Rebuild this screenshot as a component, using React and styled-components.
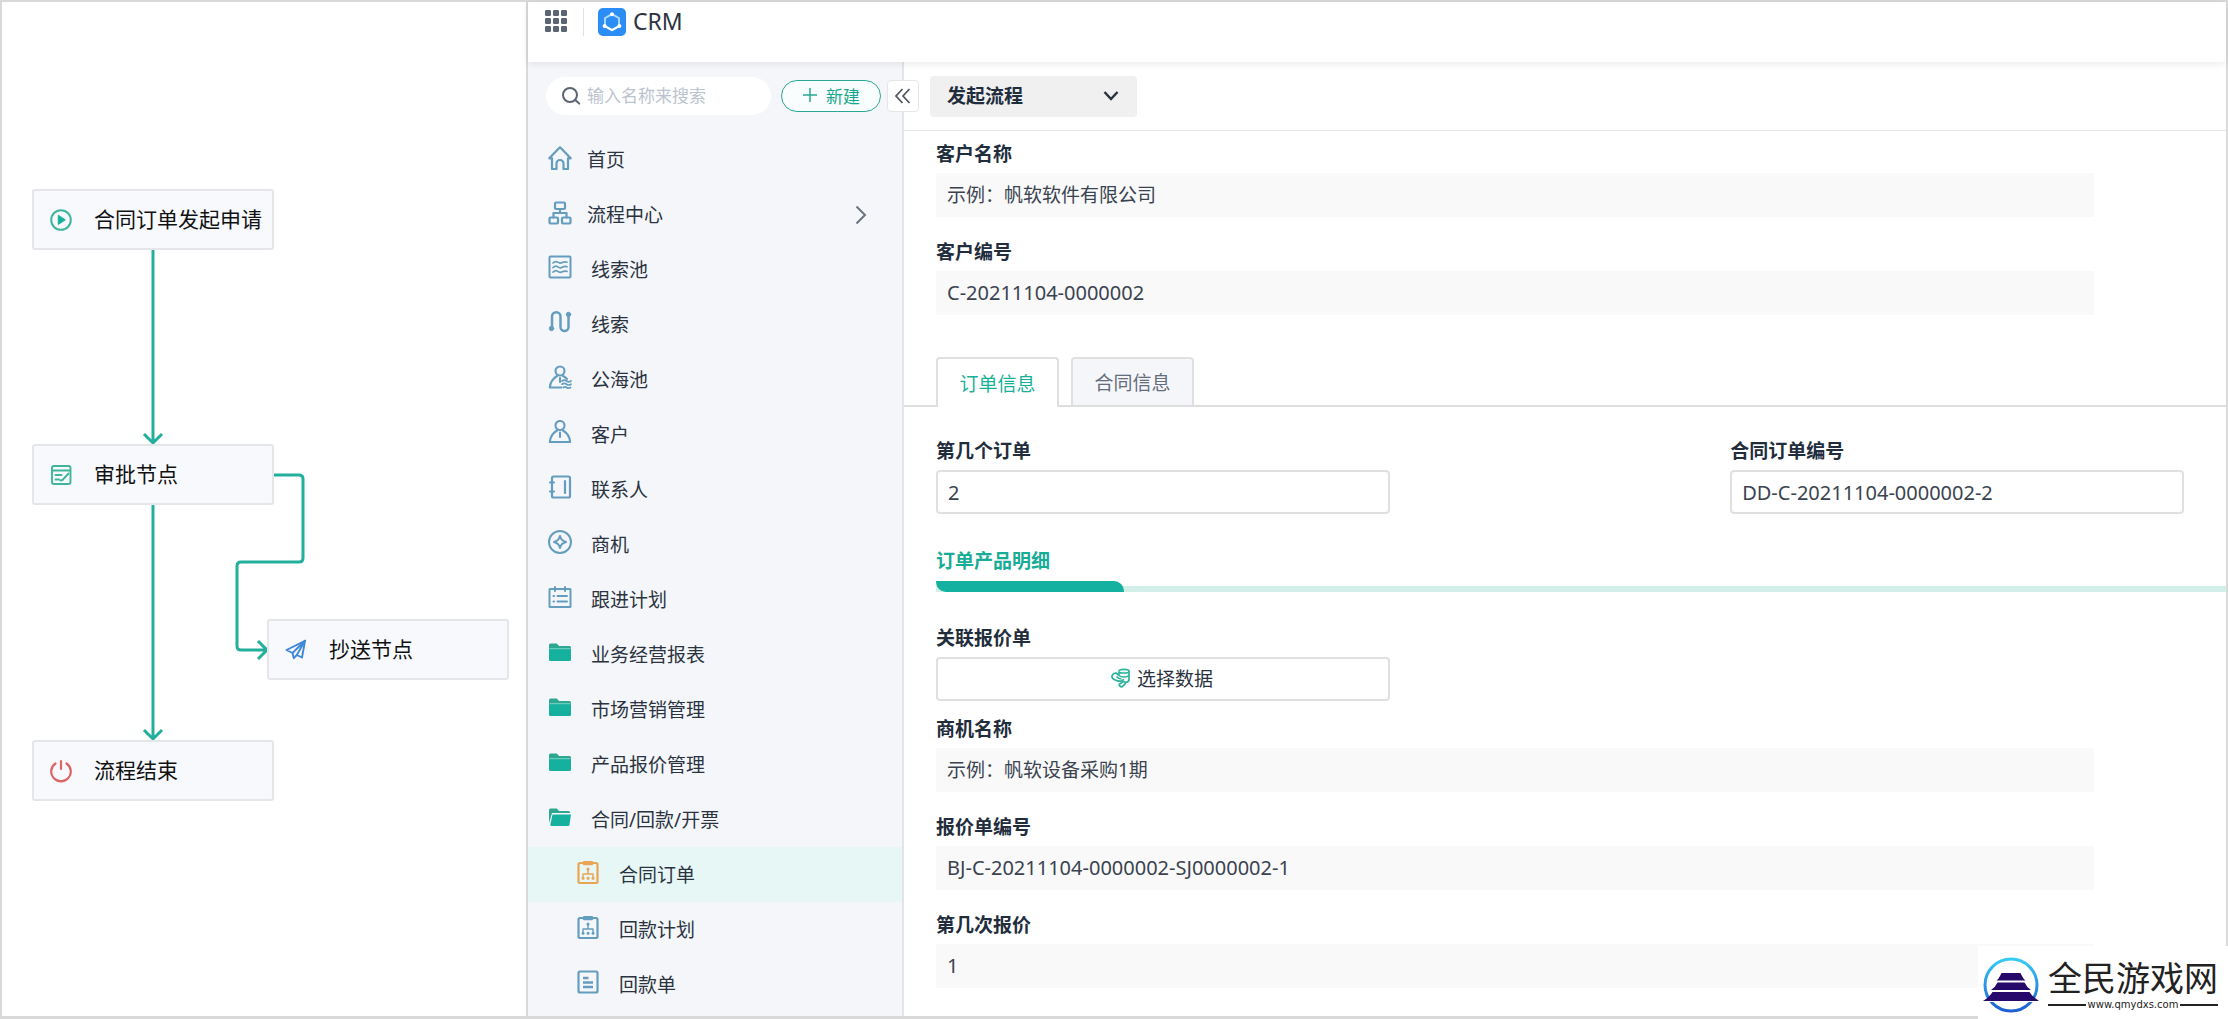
import React, { useState } from 'react';
import styled, { createGlobalStyle } from 'styled-components';

const App = () => {
    const [active, setActive] = useState('合同订单');
    const [tab, setTab] = useState('订单信息');

    return (
        <>
            <GlobalStyle />
            <Frame>
                <FlowPanel>
                    <FlowLines width="510" height="801" viewBox="0 0 510 801">
                        <path d="M151 250V441M142 434l9 9 9-9" />
                        <path d="M151 505V737M142 730l9 9 9-9" />
                        <path d="M272 475h25q4 0 4 4v79q0 4-4 4h-58q-4 0-4 4v80q0 4 4 4h25M256 641l9 9-9 9" />
                    </FlowLines>
                    {flowNodes.map((node) => (
                        <FlowNode key={node.label} $x={node.x} $y={node.y}>
                            {node.icon}
                            <FlowNodeText>{node.label}</FlowNodeText>
                        </FlowNode>
                    ))}
                </FlowPanel>

                <CrmPanel>
                    <Header>
                        <IconButton type="button" aria-label="应用">
                            <GridIcon />
                        </IconButton>
                        <HeaderDivider />
                        <CrmLogo />
                        <HeaderTitle>CRM</HeaderTitle>
                    </Header>

                    <Body>
                        <Sidebar>
                            <SidebarTop>
                                <SearchBox>
                                    <SearchIcon />
                                    <SearchInput type="text" aria-label="搜索" placeholder="输入名称来搜索" />
                                </SearchBox>
                                <NewButton type="button">
                                    <PlusIcon />
                                    新建
                                </NewButton>
                            </SidebarTop>
                            <CollapseButton type="button" aria-label="收起">
                                <CollapseIcon />
                            </CollapseButton>
                            <nav>
                                {menu.map((item) => (
                                    <MenuItem
                                        key={item.label}
                                        href="#"
                                        $level={item.level}
                                        $active={active === item.label}
                                        onClick={() => setActive(item.label)}
                                    >
                                        <MenuIcon $level={item.level}>{item.icon}</MenuIcon>
                                        <MenuText>{item.label}</MenuText>
                                        {item.more && <ArrowRightIcon />}
                                    </MenuItem>
                                ))}
                            </nav>
                        </Sidebar>

                        <Content>
                            <Toolbar>
                                <SelectWrapper>
                                    <FlowSelect aria-label="流程" defaultValue="发起流程">
                                        <option>发起流程</option>
                                    </FlowSelect>
                                    <SelectArrow />
                                </SelectWrapper>
                            </Toolbar>

                            <ReadOnlyGroup $top="10px">
                                <ReadOnlyField id="customer" label="客户名称" value="示例：帆软软件有限公司" />
                                <ReadOnlyField id="customerNo" label="客户编号" value="C-20211104-0000002" latin />
                            </ReadOnlyGroup>

                            <TabList role="tablist">
                                {['订单信息', '合同信息'].map((name) => (
                                    <Tab
                                        key={name}
                                        type="button"
                                        role="tab"
                                        aria-selected={tab === name}
                                        $active={tab === name}
                                        onClick={() => setTab(name)}
                                    >
                                        {name}
                                    </Tab>
                                ))}
                            </TabList>

                            <FormGrid>
                                <Field>
                                    <Label htmlFor="orderIndex">第几个订单</Label>
                                    <TextInput id="orderIndex" defaultValue="2" />
                                </Field>
                                <LastField>
                                    <Label htmlFor="orderNo">合同订单编号</Label>
                                    <TextInput id="orderNo" defaultValue="DD-C-20211104-0000002-2" />
                                </LastField>
                            </FormGrid>

                            <SectionTitle>订单产品明细</SectionTitle>
                            <SectionBar>
                                <SectionBarHead />
                            </SectionBar>

                            <FormGrid>
                                <Field>
                                    <Label htmlFor="quote">关联报价单</Label>
                                    <PickButton id="quote" type="button">
                                        <DataIcon />
                                        选择数据
                                    </PickButton>
                                </Field>
                            </FormGrid>

                            <ReadOnlyGroup $top="15px">
                                <ReadOnlyField id="chance" label="商机名称" value="示例：帆软设备采购1期" />
                                <ReadOnlyField id="quoteNo" label="报价单编号" value="BJ-C-20211104-0000002-SJ0000002-1" latin />
                                <ReadOnlyField id="quoteTimes" label="第几次报价" value="1" latin />
                            </ReadOnlyGroup>
                        </Content>
                    </Body>
                </CrmPanel>

                <SiteMark>
                    <PagodaLogo />
                    <SiteText>
                        <SiteName>全民游戏网</SiteName>
                        <SiteUrl>www.qmydxs.com</SiteUrl>
                    </SiteText>
                </SiteMark>
            </Frame>
        </>
    );
};

const ReadOnlyField = ({ id, label, value, latin }) => (
    <Field>
        <Label htmlFor={id}>{label}</Label>
        <ReadOnlyInput id={id} value={value} readOnly $latin={latin} />
    </Field>
);

/* ---------- icons ---------- */

const LineIcon = ({ size = 24, color = '#659dbf', width = 2.2, children }) => (
    <svg
        width={size}
        height={size}
        viewBox="0 0 24 24"
        fill="none"
        stroke={color}
        strokeWidth={width}
        strokeLinecap="round"
        strokeLinejoin="round"
        aria-hidden="true"
    >
        {children}
    </svg>
);

const GridIcon = () => (
    <svg width="22" height="22" viewBox="0 0 22 22" fill="#5b6472" aria-hidden="true">
        {[0, 8, 16].map((y) => [0, 8, 16].map((x) => <rect key={`${x}-${y}`} x={x} y={y} width="6" height="6" rx="1.2" />))}
    </svg>
);

const CrmLogo = () => (
    <svg width="28" height="28" viewBox="0 0 28 28" fill="none" aria-hidden="true">
        <rect width="28" height="28" rx="5" fill="#2b8df5" />
        <path d="M14 6.2l7 4v8l-7 4-7-4v-8z" stroke="#a9d8ff" strokeWidth="2" strokeLinejoin="round" />
        <path d="M7 18.2l7 4 7-4" stroke="#fff" strokeWidth="2" strokeLinejoin="round" />
        <circle cx="14" cy="6.2" r="2" fill="#fff" />
        <circle cx="6.6" cy="18" r="2" fill="#fff" />
        <circle cx="21.4" cy="18" r="2" fill="#fff" />
    </svg>
);

const SearchIcon = () => (
    <svg width="20" height="20" viewBox="0 0 20 20" fill="none" stroke="#5b6472" strokeWidth="2" strokeLinecap="round" aria-hidden="true">
        <circle cx="8" cy="9" r="7" />
        <path d="M13.2 14l4 3.6" />
    </svg>
);

const PlusIcon = () => (
    <svg width="16" height="16" viewBox="0 0 16 16" stroke="#2aa893" strokeWidth="1.5" aria-hidden="true">
        <path d="M8 1v14M1 8h14" />
    </svg>
);

const CollapseIcon = () => (
    <svg width="18" height="18" viewBox="0 0 18 18" fill="none" stroke="#4c5260" strokeWidth="1.7" aria-hidden="true">
        <path d="M8.5 2L2 9l6.5 7M15.5 2L9 9l6.5 7" />
    </svg>
);

const ArrowRightIcon = () => (
    <svg width="12" height="20" viewBox="0 0 12 20" fill="none" stroke="#6b7280" strokeWidth="2" aria-hidden="true">
        <path d="M1.5 1.5L10 10l-8.5 8.5" />
    </svg>
);

const PlayIcon = () => (
    <LineIcon color="#3fb59e" width={2}>
        <circle cx="12" cy="12" r="9.8" />
        <path d="M9.3 7.6v8.8l6.7-4.4z" fill="#16af98" stroke="#16af98" strokeWidth="1" />
    </LineIcon>
);

const ApproveIcon = () => (
    <LineIcon color="#3fb59e" width={1.9}>
        <rect x="3" y="3" width="18.5" height="18" rx="2" />
        <path d="M3.5 7.5h17.5M6.5 12h6M6.5 16.5h3.5M11.5 17.5l2-.5 6-6.5" />
    </LineIcon>
);

const SendIcon = () => (
    <LineIcon color="#4189d6" width={1.9}>
        <path d="M21 2.8L2.5 12l6 3 1.3 5.2 3-3.2 5.2 2.5z" />
        <path d="M21 2.8L8.5 15M21 2.8l-8.2 14.2" />
    </LineIcon>
);

const PowerIcon = () => (
    <LineIcon color="#dd6465">
        <path d="M12 2v8" />
        <path d="M6.5 4.5a9.8 9.8 0 1 0 11 0" />
    </LineIcon>
);

const HomeIcon = () => (
    <LineIcon>
        <path d="M1.3 12.3L12 1.3l10.7 11H20V23h-4.5v-5.5a3.5 3.5 0 0 0-7 0V23H4V12.3z" />
    </LineIcon>
);

const ProcessIcon = () => (
    <LineIcon>
        <rect x="7" y="1.5" width="10" height="6.5" rx="1" />
        <rect x="1.5" y="16.5" width="8.5" height="6" rx="1" />
        <rect x="14" y="16.5" width="8.5" height="6" rx="1" />
        <path d="M12 8v4M5.5 16.5V12h13v4.5" />
    </LineIcon>
);

const PoolIcon = () => (
    <LineIcon width={2}>
        <rect x="1.5" y="1.5" width="21" height="21" rx="1" />
        <path d="M5 8q2.5-2.5 4.7-.8t4.6.4T19 7.2M5 12.6q2.5-2.5 4.7-.8t4.6.4 4.7-.4M5 17.2q2.5-2.5 4.7-.8t4.6.4 4.7-.4" strokeWidth="1.7" />
    </LineIcon>
);

const ClueIcon = () => (
    <LineIcon width={2.5}>
        <path d="M4 18V6.5a4 4 0 0 1 8.5 0v10.5a4 4 0 0 0 8 0V6" />
        <circle cx="3.5" cy="18.5" r="2.2" fill="#659dbf" stroke="#659dbf" strokeWidth="1" />
        <circle cx="20.5" cy="4.5" r="2.2" fill="#659dbf" stroke="#659dbf" strokeWidth="1" />
    </LineIcon>
);

const SeaIcon = () => (
    <LineIcon width={2.1}>
        <circle cx="12" cy="6" r="4.5" />
        <path d="M13.5 22.5H1.8q.7-7.5 7.2-11.5M15 11q2.5 1.3 4 3M12 13v4" />
        <path d="M14 16q2.300-1.600 4.500 0t4.500 0M14 19.2q2.300-1.600 4.500 0t4.500 0M15.5 22.500q1.500-1.300 3 0t4 0" strokeWidth="1.7" />
    </LineIcon>
);

const CustomerIcon = () => (
    <LineIcon width={2.1}>
        <circle cx="12" cy="5.5" r="4.5" />
        <path d="M9 10.5q-6.5 4-7.2 11.5h20.4q-.7-7.5-7.2-11.5M12 12.5v4.5" />
    </LineIcon>
);

const ContactIcon = () => (
    <LineIcon>
        <rect x="4" y="1.5" width="18" height="21" rx="1.5" />
        <path d="M17 6v12M2 7.5h4M2 16.5h4" />
    </LineIcon>
);

const ChanceIcon = () => (
    <LineIcon width={2}>
        <circle cx="12" cy="12" r="11" />
        <path d="M12 6q1.2 4.8 6 6-4.8 1.2-6 6-1.2-4.8-6-6 4.8-1.2 6-6z" />
    </LineIcon>
);

const PlanIcon = () => (
    <LineIcon width={2}>
        <rect x="1.5" y="4" width="21" height="18" rx="0.5" />
        <path d="M7 2v4M17 2v4M9.5 11H19M9.5 16.5H19M5.5 11h.6M5.5 16.5h.6" />
    </LineIcon>
);

const FolderIcon = () => (
    <svg width="24" height="24" viewBox="0 0 24 24" aria-hidden="true">
        <path d="M1 7V5a1.5 1.5 0 0 1 1.5-1.5h6.3L11 6h10.5A1.5 1.5 0 0 1 23 7.5V9H1z" fill="#2ea791" />
        <path d="M1 8.5h22v11a1.5 1.5 0 0 1-1.5 1.5h-19A1.5 1.5 0 0 1 1 19.5z" fill="#16b09f" />
        <path d="M1.5 8.7h21" stroke="#7fd3c6" strokeWidth="1" />
    </svg>
);

const FolderOpenIcon = () => (
    <svg width="24" height="24" viewBox="0 0 24 24" aria-hidden="true">
        <path d="M1 18V5a1.5 1.5 0 0 1 1.5-1.5h6.3L11 6h9.5A1.5 1.5 0 0 1 22 7.5V8H4z" fill="#2ea791" />
        <path d="M4.5 9.5H23l-1.5 10.3q-.2 1.2-1.5 1.2H3.5q-1.3 0-1.2-1.3z" fill="#16b09f" />
    </svg>
);

const ClipboardIcon = ({ color }) => (
    <LineIcon color={color}>
        <rect x="2.5" y="3" width="19" height="20" rx="1.5" />
        <path d="M8 2.2h8v2H8z" fill={color} />
        <path d="M12 9v5M7 17v-3h10v3" strokeWidth="1.4" />
        <path d="M12 9v.2M7 18.2h.1M12 18.2h.1M17 18.2h.1" strokeWidth="3" />
    </LineIcon>
);

const DocIcon = () => (
    <LineIcon>
        <rect x="2.5" y="1.5" width="19" height="21" rx="1.5" />
        <path d="M7 8h5.5M7 12.5h10M7 17h10" strokeWidth="2.4" strokeLinecap="butt" />
    </LineIcon>
);

const DataIcon = () => (
    <svg width="20" height="20" viewBox="0 0 20 20" fill="none" stroke="#2db29c" strokeWidth="1.7" strokeLinejoin="round" aria-hidden="true">
        <path d="M8 3.2q0-1.8 5-1.8t5 1.8v9.3q-1 1.8-3.5 1.8" />
        <path d="M8 3.2q0 1.8 5 1.8t5-1.8M8 3.2v4.3q1.5 1.5 5 1.5t5-1.5" />
        <path d="M7.5 7L5.5 5.2Q3 4.8 1.5 7t.8 4q3 2 7.2 2.3l3.5-1.8" />
        <path d="M5.5 8.5q2 2.5 5 2.5M8.2 16.2l4.5-2.7q2 .3 1.5 2.3l-3.2 3q-2.8-.2-2.8-2.6z" />
    </svg>
);

const PagodaLogo = () => (
    <svg width="58" height="58" viewBox="0 0 58 58" aria-hidden="true">
        <defs>
            <linearGradient id="ring" x1="0" y1="0" x2="0" y2="1">
                <stop offset="0" stopColor="#35cdf4" />
                <stop offset="1" stopColor="#1f5fd0" />
            </linearGradient>
        </defs>
        <circle cx="29" cy="29" r="26" fill="none" stroke="url(#ring)" strokeWidth="3" />
        <path d="M0 42h58v4H0z" fill="#fff" />
        <path d="M19.5 17h19l1.5 3q1.5 3 3.5 4.5h-29q2-1.5 3.5-4.5z" fill="#26096b" />
        <path d="M15.5 26.5h27q2 4.5 6.5 7.5H9q4.5-3 6.5-7.5z" fill="#26096b" />
        <path d="M10.5 36h37q3 5 9.500 9H1q6.500-4 9.500-9z" fill="#26096b" />
    </svg>
);

/* ---------- data ---------- */

const flowNodes = [
    { label: '合同订单发起申请', x: 30, y: 189, icon: <PlayIcon /> },
    { label: '审批节点', x: 30, y: 444, icon: <ApproveIcon /> },
    { label: '抄送节点', x: 265, y: 619, icon: <SendIcon /> },
    { label: '流程结束', x: 30, y: 740, icon: <PowerIcon /> },
];

const menu = [
    { label: '首页', level: 0, icon: <HomeIcon /> },
    { label: '流程中心', level: 0, icon: <ProcessIcon />, more: true },
    { label: '线索池', level: 1, icon: <PoolIcon /> },
    { label: '线索', level: 1, icon: <ClueIcon /> },
    { label: '公海池', level: 1, icon: <SeaIcon /> },
    { label: '客户', level: 1, icon: <CustomerIcon /> },
    { label: '联系人', level: 1, icon: <ContactIcon /> },
    { label: '商机', level: 1, icon: <ChanceIcon /> },
    { label: '跟进计划', level: 1, icon: <PlanIcon /> },
    { label: '业务经营报表', level: 1, icon: <FolderIcon /> },
    { label: '市场营销管理', level: 1, icon: <FolderIcon /> },
    { label: '产品报价管理', level: 1, icon: <FolderIcon /> },
    { label: '合同/回款/开票', level: 1, icon: <FolderOpenIcon /> },
    { label: '合同订单', level: 2, icon: <ClipboardIcon color="#e9a454" /> },
    { label: '回款计划', level: 2, icon: <ClipboardIcon color="#659dbf" /> },
    { label: '回款单', level: 2, icon: <DocIcon /> },
];

/* ---------- styles ---------- */

const GlobalStyle = createGlobalStyle`
    * {
        box-sizing: border-box;
    }
    body {
        margin: 0;
        background: #fff;
        color: #1f2d3d;
        font-family: "Noto Sans", "Noto Sans CJK SC", sans-serif;
        font-size: 19px;
    }
    button, input, select {
        font-family: inherit;
        font-size: inherit;
        color: inherit;
        margin: 0;
    }
    button {
        cursor: pointer;
    }
`;

const Frame = styled.div`
    display: flex;
    position: relative;
    min-height: 100vh;
    border: 2px solid #d9d9d9;
    border-bottom-width: 3px;
`;

const FlowPanel = styled.section`
    position: relative;
    flex: 0 0 526px;
    margin-top: -2px;
    border-right: 2px solid #d9d9d9;
`;

const FlowLines = styled.svg`
    display: block;
    fill: none;
    stroke: #22b09c;
    stroke-width: 3px;
`;

const FlowNode = styled.div`
    display: flex;
    align-items: center;
    gap: 21px;
    position: absolute;
    left: ${({ $x }) => $x}px;
    top: ${({ $y }) => $y}px;
    width: 242px;
    height: 61px;
    padding-left: 15px;
    border: 2px solid #e4e6ea;
    border-radius: 3px;
    background: #f7f9fd;
    color: #111;
    font-size: 21px;
    white-space: nowrap;
`;

const FlowNodeText = styled.span`
    padding-bottom: 3px;
`;

const CrmPanel = styled.section`
    display: flex;
    flex-direction: column;
    flex: 1;
    min-width: 0;
`;

const Header = styled.header`
    display: flex;
    align-items: flex-start;
    position: relative;
    z-index: 2;
    height: 60px;
    padding: 6px 0 0 17px;
    background: #fff;
    box-shadow: 0 2px 8px rgba(0, 0, 0, 0.08);
`;

const IconButton = styled.button`
    display: flex;
    padding: 2px 0;
    border: none;
    background: none;
`;

const HeaderDivider = styled.div`
    width: 1px;
    height: 28px;
    margin: 0 14px 0 16px;
    background: #dfe1e5;
`;

const HeaderTitle = styled.h1`
    margin: 0 0 0 7px;
    color: #2b3340;
    font-size: 23px;
    font-weight: 400;
    line-height: 26px;
`;

const Body = styled.div`
    display: flex;
    flex: 1;
`;

const Sidebar = styled.aside`
    position: relative;
    flex: 0 0 376px;
    min-width: 0;
    border-right: 2px solid #e3e4e7;
    background: #f4f6fa;
`;

const SidebarTop = styled.div`
    display: flex;
    align-items: center;
    gap: 10px;
    padding: 15px 21px 17px 18px;
`;

const SearchBox = styled.div`
    display: flex;
    align-items: center;
    flex: 1;
    gap: 5px;
    min-width: 0;
    height: 38px;
    padding: 0 16px;
    border-radius: 19px;
    background: #fff;
`;

const SearchInput = styled.input`
    flex: 1;
    min-width: 0;
    padding: 0 0 1px;
    border: none;
    outline: none;
    background: none;
    font-size: 17px;

    &::placeholder {
        color: #bcc3cf;
    }
`;

const NewButton = styled.button`
    display: flex;
    align-items: center;
    justify-content: center;
    gap: 8px;
    width: 100px;
    height: 32px;
    padding: 0 0 2px;
    border: 1px solid #2aa893;
    border-radius: 16px;
    background: #f9fdfd;
    color: #1aa58e;
    font-size: 17px;
`;

const CollapseButton = styled.button`
    display: flex;
    align-items: center;
    justify-content: center;
    position: absolute;
    z-index: 1;
    top: 18px;
    right: -17px;
    width: 32px;
    height: 32px;
    padding: 0;
    border: 1px solid #e4e6ea;
    border-radius: 4px;
    background: #fff;
`;

const MenuItem = styled.a`
    display: flex;
    align-items: center;
    height: 55px;
    padding: 0 35px 0 ${({ $level }) => ($level === 2 ? '48px' : '20px')};
    background: ${({ $active }) => ($active ? '#e6f7f5' : 'transparent')};
    color: #2b3340;
    text-decoration: none;
`;

const MenuIcon = styled.span`
    display: flex;
    margin-right: ${({ $level }) => ($level === 0 ? '15px' : '19px')};
    padding-bottom: ${({ $level }) => ($level === 0 ? '4px' : '6px')};
`;

const MenuText = styled.span`
    flex: 1;
    padding-bottom: 2px;
`;

const Content = styled.main`
    flex: 1;
    min-width: 0;
    padding-bottom: 26px;
    background: #fff;
`;

const Toolbar = styled.div`
    display: flex;
    align-items: center;
    height: 69px;
    padding-left: 26px;
    border-bottom: 1px solid #e4e4e4;
`;

const SelectWrapper = styled.div`
    display: flex;
    position: relative;
    width: 207px;
`;

const FlowSelect = styled.select`
    width: 100%;
    height: 41px;
    padding: 0 17px;
    border: none;
    border-radius: 4px;
    appearance: none;
    background: #f0f0f0;
    font-weight: 700;
`;

const SelectArrow = () => (
    <ArrowSvg width="16" height="12" viewBox="0 0 16 12" aria-hidden="true">
        <path d="M1.5 2L8 9l6.5-7" />
    </ArrowSvg>
);

const ArrowSvg = styled.svg`
    position: absolute;
    top: 14px;
    right: 18px;
    fill: none;
    stroke: #2b3340;
    stroke-width: 2.5px;
    pointer-events: none;
`;

const ReadOnlyGroup = styled.div`
    display: flex;
    flex-direction: column;
    gap: 22px;
    padding: ${({ $top }) => $top} 132px 0 32px;
`;

const Field = styled.div`
    display: flex;
    flex-direction: column;
    gap: 6px;
`;

const LastField = styled(Field)`
    grid-column: 3;
`;

const Label = styled.label`
    font-weight: 700;
    line-height: 26px;
`;

const ReadOnlyInput = styled.input`
    width: 100%;
    height: 44px;
    padding: 0 11px 2px;
    border: none;
    outline: none;
    background: #f9f9f9;
    color: #3a4350;
    font-size: ${({ $latin }) => ($latin ? '20px' : '19px')};
`;

const TabList = styled.div`
    display: flex;
    align-items: flex-end;
    gap: 12px;
    margin-top: 42px;
    padding-left: 32px;
    border-bottom: 2px solid #dedede;
`;

const Tab = styled.button`
    width: 123px;
    height: ${({ $active }) => ($active ? '50px' : '48px')};
    margin-bottom: ${({ $active }) => ($active ? '-2px' : '0')};
    padding: 0;
    border: 2px solid #e0e0e0;
    border-bottom: none;
    border-radius: 4px 4px 0 0;
    background: ${({ $active }) => ($active ? '#fff' : '#f4f6fa')};
    color: ${({ $active }) => ($active ? '#18b098' : '#646b7b')};
`;

// two field columns with an empty one between them
const FormGrid = styled.div`
    display: grid;
    grid-template-columns: 4fr 3fr 4fr;
    padding: 31px 42px 0 32px;
`;

const TextInput = styled.input`
    width: 100%;
    height: 44px;
    padding: 0 10px;
    border: 2px solid #e0e0e0;
    border-radius: 4px;
    outline: none;
    background: #fff;
    color: #3a4350;
    font-size: 20px;
`;

const SectionTitle = styled.h2`
    margin: 34px 0 7px 32px;
    color: #18ab96;
    font-size: 19px;
    font-weight: 700;
    line-height: 26px;
`;

const SectionBar = styled.div`
    height: 11px;
    margin: 0 0 2px 32px;
    background: linear-gradient(to top, #d3efea 6px, transparent 6px);
`;

const SectionBarHead = styled.div`
    width: 188px;
    height: 11px;
    border-radius: 0 10px 0 10px;
    background: #14b0a0;
`;

const PickButton = styled.button`
    display: flex;
    align-items: center;
    justify-content: center;
    gap: 6px;
    width: 100%;
    height: 44px;
    padding: 0 2px 2px 0;
    border: 2px solid #e0e0e0;
    border-radius: 4px;
    background: #fff;
    color: #2b3340;
`;

const SiteMark = styled.footer`
    display: flex;
    align-items: center;
    gap: 8px;
    position: absolute;
    z-index: 3;
    right: -2px;
    bottom: -3px;
    height: 73px;
    padding: 5px 10px 0 4px;
    background: #fff;
`;

const SiteText = styled.div`
    display: flex;
    flex-direction: column;
    color: #222;
`;

const SiteName = styled.div`
    font-size: 34px;
    line-height: 40px;
`;

const SiteUrl = styled.div`
    display: flex;
    align-items: center;
    gap: 2px;
    font-family: "DejaVu Sans", sans-serif;
    font-size: 10px;
    line-height: 14px;

    &::before,
    &::after {
        content: "";
        flex: 1;
        height: 2px;
        background: #222;
    }
`;

export default App;
